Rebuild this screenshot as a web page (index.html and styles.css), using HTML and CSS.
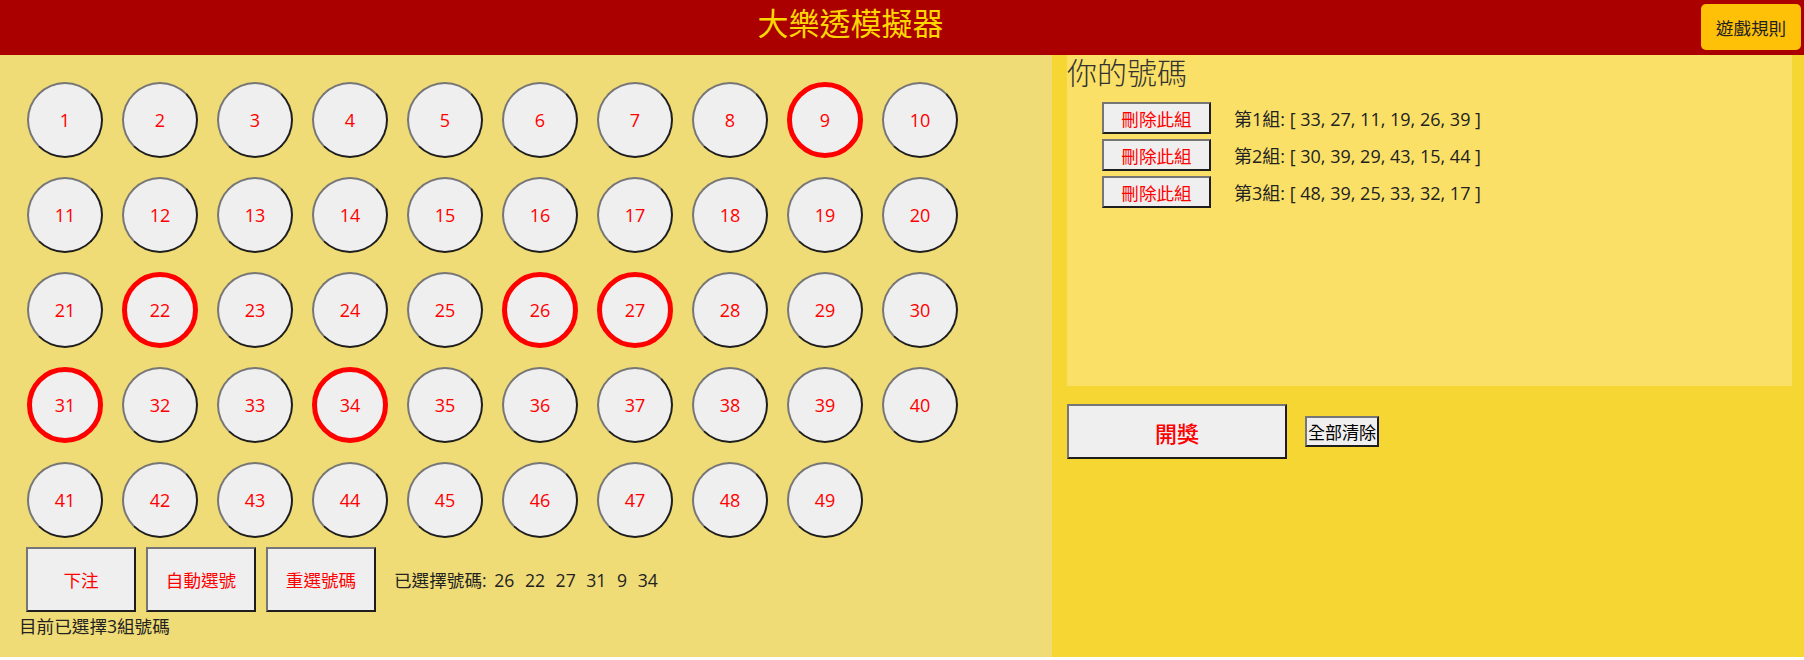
FILE: index.html
```html
<!DOCTYPE html>
<html lang="zh-Hant">
<head>
<meta charset="utf-8">
<title>大樂透模擬器</title>
<link rel="stylesheet" href="styles.css">
</head>
<body>
<header class="topbar">
  <h1 class="title">大樂透模擬器</h1>
  <button class="rules-btn">遊戲規則</button>
</header>
<main class="main">
  <section class="left">
    <div class="balls">
      <button class="ball">1</button><button class="ball">2</button><button class="ball">3</button><button class="ball">4</button><button class="ball">5</button><button class="ball">6</button><button class="ball">7</button><button class="ball">8</button><button class="ball sel">9</button><button class="ball">10</button>
      <button class="ball">11</button><button class="ball">12</button><button class="ball">13</button><button class="ball">14</button><button class="ball">15</button><button class="ball">16</button><button class="ball">17</button><button class="ball">18</button><button class="ball">19</button><button class="ball">20</button>
      <button class="ball">21</button><button class="ball sel">22</button><button class="ball">23</button><button class="ball">24</button><button class="ball">25</button><button class="ball sel">26</button><button class="ball sel">27</button><button class="ball">28</button><button class="ball">29</button><button class="ball">30</button>
      <button class="ball sel">31</button><button class="ball">32</button><button class="ball">33</button><button class="ball sel">34</button><button class="ball">35</button><button class="ball">36</button><button class="ball">37</button><button class="ball">38</button><button class="ball">39</button><button class="ball">40</button>
      <button class="ball">41</button><button class="ball">42</button><button class="ball">43</button><button class="ball">44</button><button class="ball">45</button><button class="ball">46</button><button class="ball">47</button><button class="ball">48</button><button class="ball">49</button>
    </div>
    <div class="actions">
      <button class="act-btn">下注</button>
      <button class="act-btn">自動選號</button>
      <button class="act-btn">重選號碼</button>
      <div class="picked">已選擇號碼: <span class="pn">26</span> <span class="pn">22</span> <span class="pn">27</span> <span class="pn">31</span> <span class="pn">9</span> <span class="pn">34</span></div>
    </div>
    <p class="status">目前已選擇3組號碼</p>
  </section>
  <section class="right">
    <div class="mybox">
      <h2 class="my-title">你的號碼</h2>
      <ul class="sets">
        <li class="set"><button class="del-btn">刪除此組</button><span class="set-text">第1組: [ 33, 27, 11, 19, 26, 39 ]</span></li>
        <li class="set"><button class="del-btn">刪除此組</button><span class="set-text">第2組: [ 30, 39, 29, 43, 15, 44 ]</span></li>
        <li class="set"><button class="del-btn">刪除此組</button><span class="set-text">第3組: [ 48, 39, 25, 33, 32, 17 ]</span></li>
      </ul>
    </div>
    <div class="draw-row">
      <button class="draw-btn">開獎</button>
      <button class="clear-btn">全部清除</button>
    </div>
  </section>
</main>
</body>
</html>
```
FILE: styles.css
```css
* { box-sizing: border-box; }
body {
  margin: 0;
  background: #ffffff;
  font-family: "Open Sans", "Noto Sans CJK TC", sans-serif;
  color: #222;
}
button {
  font-family: "Open Sans", "Noto Sans CJK TC", sans-serif;
  cursor: pointer;
}
.topbar {
  height: 55px;
  background: #aa0000;
  display: flex;
  align-items: flex-start;
}
.title {
  flex: 1;
  margin: 0;
  padding-top: 4px;
  text-align: center;
  font-size: 31px;
  line-height: 38px;
  font-weight: 400;
  color: #ffd700;
}
.rules-btn {
  margin: 4px 3px 0 0;
  width: 100px;
  height: 46px;
  background: #ffc107;
  border: 0;
  border-radius: 5px;
  font-size: 17.6px;
  color: #222;
  padding: 0;
}
.main {
  display: flex;
  height: 602px;
}
.left {
  width: 1052px;
  background: #f0dc76;
  padding: 27px 0 0 19px;
}
.balls {
  display: grid;
  grid-template-columns: repeat(10, 76px);
  gap: 19px;
  margin-left: 8px;
}
.ball {
  width: 76px;
  height: 76px;
  border-radius: 50%;
  background: #efefef;
  border: 2px solid;
  border-color: #767676 #1e1e1e #1e1e1e #767676;
  color: #f00;
  font-size: 18px;
  padding: 0;
}
.ball.sel {
  border: 5px solid #f00;
}
.actions {
  display: flex;
  align-items: center;
  gap: 10px;
  margin: 9px 0 0 7px;
}
.act-btn {
  width: 110px;
  height: 65px;
  background: #efefef;
  border: 2px solid;
  border-color: #767676 #1e1e1e #1e1e1e #767676;
  color: #f00;
  font-size: 17.6px;
  padding: 0;
}
.picked {
  margin-left: 8px;
  font-size: 17.6px;
  color: #222;
}
.pn { padding: 0 3px; }
.status {
  margin: 1px 0 0 0;
  font-size: 17.6px;
  line-height: 26px;
  color: #222;
}
.right {
  flex: 1;
  background: #f5d632;
  padding: 0 12px 0 15px;
}
.mybox {
  background: #fae066;
  height: 331px;
}
.my-title {
  margin: 0;
  font-size: 30px;
  line-height: 36px;
  font-weight: 300;
  color: #333;
}
.sets {
  list-style: none;
  margin: 11px 0 0 0;
  padding: 0 0 0 35px;
  display: flex;
  flex-direction: column;
  gap: 5px;
}
.set {
  display: flex;
  align-items: center;
  gap: 23px;
}
.del-btn {
  width: 109px;
  height: 32px;
  background: #efefef;
  border: 2px solid;
  border-color: #767676 #1e1e1e #1e1e1e #767676;
  color: #f00;
  font-size: 17.6px;
  padding: 0;
}
.set-text {
  font-size: 18px;
  color: #222;
}
.draw-row {
  display: flex;
  align-items: center;
  gap: 18px;
  margin-top: 18px;
}
.draw-btn {
  width: 220px;
  height: 55px;
  background: #efefef;
  border: 2px solid;
  border-color: #767676 #1e1e1e #1e1e1e #767676;
  color: #f00;
  font-size: 22px;
  font-weight: 500;
  padding: 0;
}
.clear-btn {
  height: 31px;
  background: #efefef;
  border: 2px solid;
  border-color: #767676 #1e1e1e #1e1e1e #767676;
  color: #000;
  font-size: 17px;
  padding: 0 1px;
}
```
